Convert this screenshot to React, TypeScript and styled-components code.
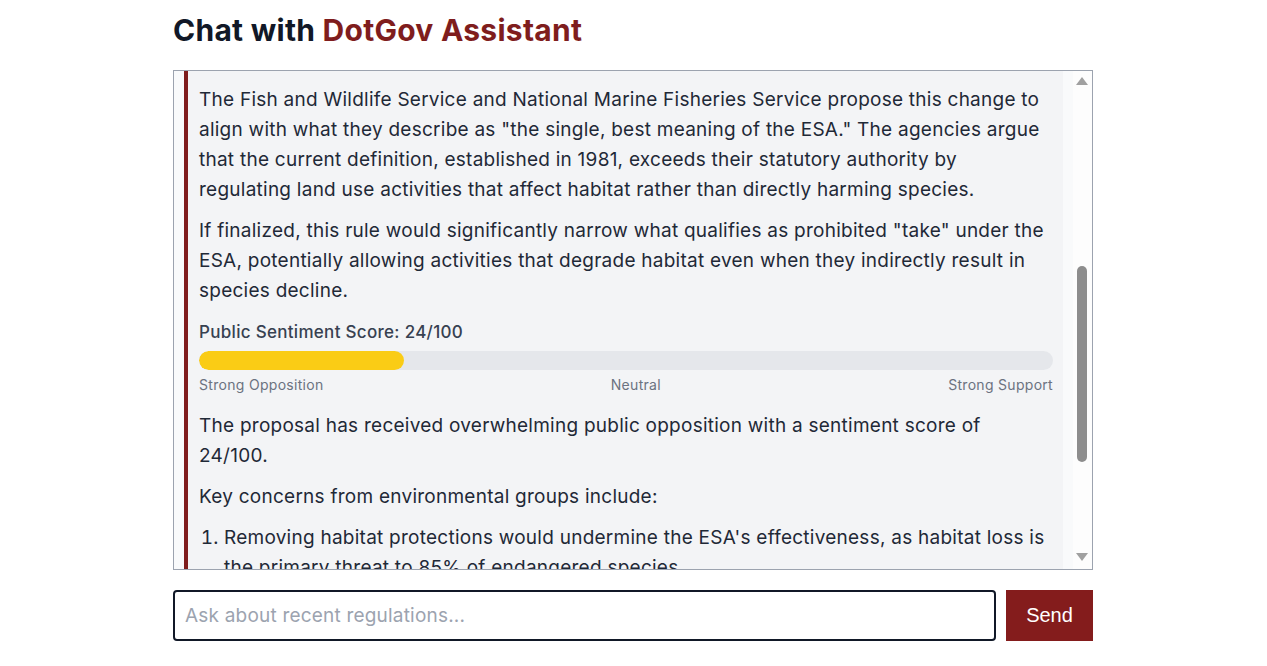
import React, { useLayoutEffect, useRef, useState } from 'react';
import styled, { createGlobalStyle } from 'styled-components';

const GlobalStyle = createGlobalStyle`
  html, body {
    margin: 0;
    padding: 0;
    background: #ffffff;
  }
  body {
    padding-right: 1px;
    font-family: Inter, 'Noto Sans', sans-serif;
    color: #1f2937;
  }
  * {
    box-sizing: border-box;
  }
`;

const Page = styled.main`
  max-width: 920px;
  margin: 0 auto;
  padding-top: 12px;
`;

const Title = styled.h1`
  margin: 0 0 22px;
  font-size: 30px;
  line-height: 36px;
  font-weight: 700;
  letter-spacing: 0.27px;
  color: #111827;
`;

const Brand = styled.span`
  color: #7f1d1d;
`;

const ChatBox = styled.section`
  display: flex;
  height: 500px;
  border: 1px solid #9ca3af;
  background: #f9fafb;
`;

const Scroller = styled.div`
  position: relative;
  flex: 1;
  overflow-y: scroll;
  scrollbar-width: none;
  padding: 10px;
  display: flex;
  flex-direction: column;
  gap: 14px;
  &::-webkit-scrollbar {
    display: none;
  }
`;

const Rail = styled.div`
  width: 19px;
  flex-shrink: 0;
  display: flex;
  flex-direction: column;
  background: #fdfdfd;
`;

const ArrowBox = styled.div<{ $dir: 'up' | 'down' }>`
  height: 20px;
  display: flex;
  align-items: ${(p) => (p.$dir === 'up' ? 'flex-end' : 'flex-start')};
  justify-content: center;
  padding: ${(p) => (p.$dir === 'up' ? '0 1px 6px 0' : '4px 1px 0 0')};
  &::before {
    content: '';
    width: 0;
    height: 0;
    border-left: 6px solid transparent;
    border-right: 6px solid transparent;
    ${(p) =>
      p.$dir === 'up' ? 'border-bottom: 8px solid #a0a0a0;' : 'border-top: 8px solid #a0a0a0;'}
  }
`;

const Track = styled.div`
  flex: 1;
  display: flex;
  flex-direction: column;
  align-items: center;
  padding-right: 1px;
`;

const Thumb = styled.div`
  width: 10px;
  flex-shrink: 0;
  border-radius: 5px;
  background: #8d8d8d;
`;

const Bubble = styled.div<{ $role: 'user' | 'assistant' }>`
  flex-shrink: 0;
  font-size: 19px;
  line-height: 30px;
  letter-spacing: 0.25px;
  ${(p) =>
    p.$role === 'user'
      ? `
    align-self: flex-end;
    max-width: 70%;
    padding: 10px 14px;
    background: #7f1d1d;
    color: #ffffff;
    border-radius: 6px;
  `
      : `
    padding: 14px 10px 14px 11px;
    color: #1f2937;
    background: #f3f4f6;
    border-left: 4px solid #7f1d1d;
  `}
`;

const Para = styled.p`
  margin: 0 0 11px;
`;

const Heading = styled.h3`
  margin: 0 0 10px;
  font-size: 21px;
  line-height: 30px;
  font-weight: 700;
  color: #111827;
`;

const Sentiment = styled.div`
  padding-top: 3px;
  margin: 0 0 15px;
`;

const ScoreLabel = styled.div`
  font-size: 17px;
  line-height: 24px;
  font-weight: 500;
  letter-spacing: 0.3px;
  color: #374151;
  margin-bottom: 7px;
`;

const Bar = styled.div`
  height: 19px;
  border-radius: 999px;
  background: #e5e7eb;
  overflow: hidden;
`;

const BarFill = styled.div`
  height: 100%;
  border-radius: 999px;
  background: #facc15;
`;

const Scale = styled.div`
  display: flex;
  justify-content: space-between;
  margin-top: 4px;
  font-size: 14px;
  line-height: 22px;
  letter-spacing: 0.3px;
  color: #6b7280;
`;

const List = styled.ol`
  margin: 0 0 11px;
  padding-left: 25px;
`;

const Item = styled.li`
  margin-bottom: 8px;
`;

const InputRow = styled.form`
  display: flex;
  gap: 10px;
  margin-top: 20px;
`;

const Input = styled.input`
  flex: 1;
  height: 51px;
  border: 2px solid #111827;
  border-radius: 4px;
  padding: 0 10px;
  font-family: Inter, 'Noto Sans', sans-serif;
  font-size: 19px;
  letter-spacing: 0.2px;
  color: #111827;
  outline: none;
  &::placeholder {
    color: #9ca3af;
  }
`;

const SendButton = styled.button`
  width: 87px;
  height: 51px;
  border: none;
  background: #841c1c;
  color: #ffffff;
  font-family: 'Liberation Sans', Arial, sans-serif;
  font-size: 20px;
  cursor: pointer;
`;

const score = 24;

export default function App() {
  const scrollRef = useRef<HTMLDivElement>(null);
  const anchorRef = useRef<HTMLParagraphElement>(null);
  const trackRef = useRef<HTMLDivElement>(null);
  const [thumb, setThumb] = useState({ top: 0, height: 40 });

  useLayoutEffect(() => {
    const el = scrollRef.current;
    const anchor = anchorRef.current;
    const track = trackRef.current;
    if (!el || !anchor || !track) return;
    el.scrollTop = anchor.offsetTop - 14;
    const update = () => {
      const h = track.clientHeight;
      setThumb({
        top: (el.scrollTop / el.scrollHeight) * h,
        height: (el.clientHeight / el.scrollHeight) * h,
      });
    };
    update();
    el.addEventListener('scroll', update);
    return () => el.removeEventListener('scroll', update);
  }, []);

  return (
    <>
      <GlobalStyle />
      <Page>
        <Title>
          Chat with <Brand>DotGov Assistant</Brand>
        </Title>
        <ChatBox>
          <Scroller ref={scrollRef}>
            <Bubble $role="user">What's the latest on the ESA "harm" definition?</Bubble>
            <Bubble $role="assistant">
              <Heading>Rescinding the Definition of "Harm" Under the ESA</Heading>
              <Para>
                On April 17, 2025, federal agencies proposed a rule that would remove the regulatory
                definition of "harm" under the Endangered Species Act. The current definition includes
                significant habitat modification or degradation that actually kills or injures wildlife.
              </Para>
              <Para>
                The proposed rule was published in the Federal Register and is open for public comment
                through May 19, 2025. Comments can be submitted electronically through Regulations.gov
                under the docket numbers listed in the notice, and the agencies will review every
                submission before deciding whether to finalize the rule.
              </Para>
              <Para>
                Under the ESA, it is unlawful to "take" a listed species, a term the statute defines to
                include harassing, harming, pursuing, hunting, shooting, wounding, killing, trapping,
                capturing or collecting, or attempting any of these acts.
              </Para>
              <Para ref={anchorRef}>
                The Fish and Wildlife Service and National Marine Fisheries Service propose this change to
                align with what they describe as "the single, best meaning of the ESA." The agencies argue
                that the current definition, established in 1981, exceeds their statutory authority by
                regulating land use activities that affect habitat rather than directly harming species.
              </Para>
              <Para>
                If finalized, this rule would significantly narrow what qualifies as prohibited "take" under
                the ESA, potentially allowing activities that degrade habitat even when they indirectly
                result in species decline.
              </Para>
              <Sentiment>
                <ScoreLabel>Public Sentiment Score: {score}/100</ScoreLabel>
                <Bar>
                  <BarFill style={{ width: `${score}%` }} />
                </Bar>
                <Scale>
                  <span>Strong Opposition</span>
                  <span>Neutral</span>
                  <span>Strong Support</span>
                </Scale>
              </Sentiment>
              <Para>
                The proposal has received overwhelming public opposition with a sentiment score of 24/100.
              </Para>
              <Para>Key concerns from environmental groups include:</Para>
              <List>
                <Item>
                  Removing habitat protections would undermine the ESA's effectiveness, as habitat loss is
                  the primary threat to 85% of endangered species.
                </Item>
                <Item>
                  The change could open critical habitat to logging, mining and development without any
                  federal review of the harm to listed species.
                </Item>
                <Item>
                  The reinterpretation conflicts with the 1995 Supreme Court ruling in Babbitt v. Sweet
                  Home, which upheld the current definition.
                </Item>
                <Item>Recovery plans for hundreds of species depend on habitat protection.</Item>
              </List>
            </Bubble>
          </Scroller>
          <Rail>
            <ArrowBox $dir="up" />
            <Track ref={trackRef}>
              <Thumb style={{ marginTop: thumb.top, height: thumb.height }} />
            </Track>
            <ArrowBox $dir="down" />
          </Rail>
        </ChatBox>
        <InputRow onSubmit={(e) => e.preventDefault()}>
          <Input placeholder="Ask about recent regulations..." />
          <SendButton type="submit">Send</SendButton>
        </InputRow>
      </Page>
    </>
  );
}
